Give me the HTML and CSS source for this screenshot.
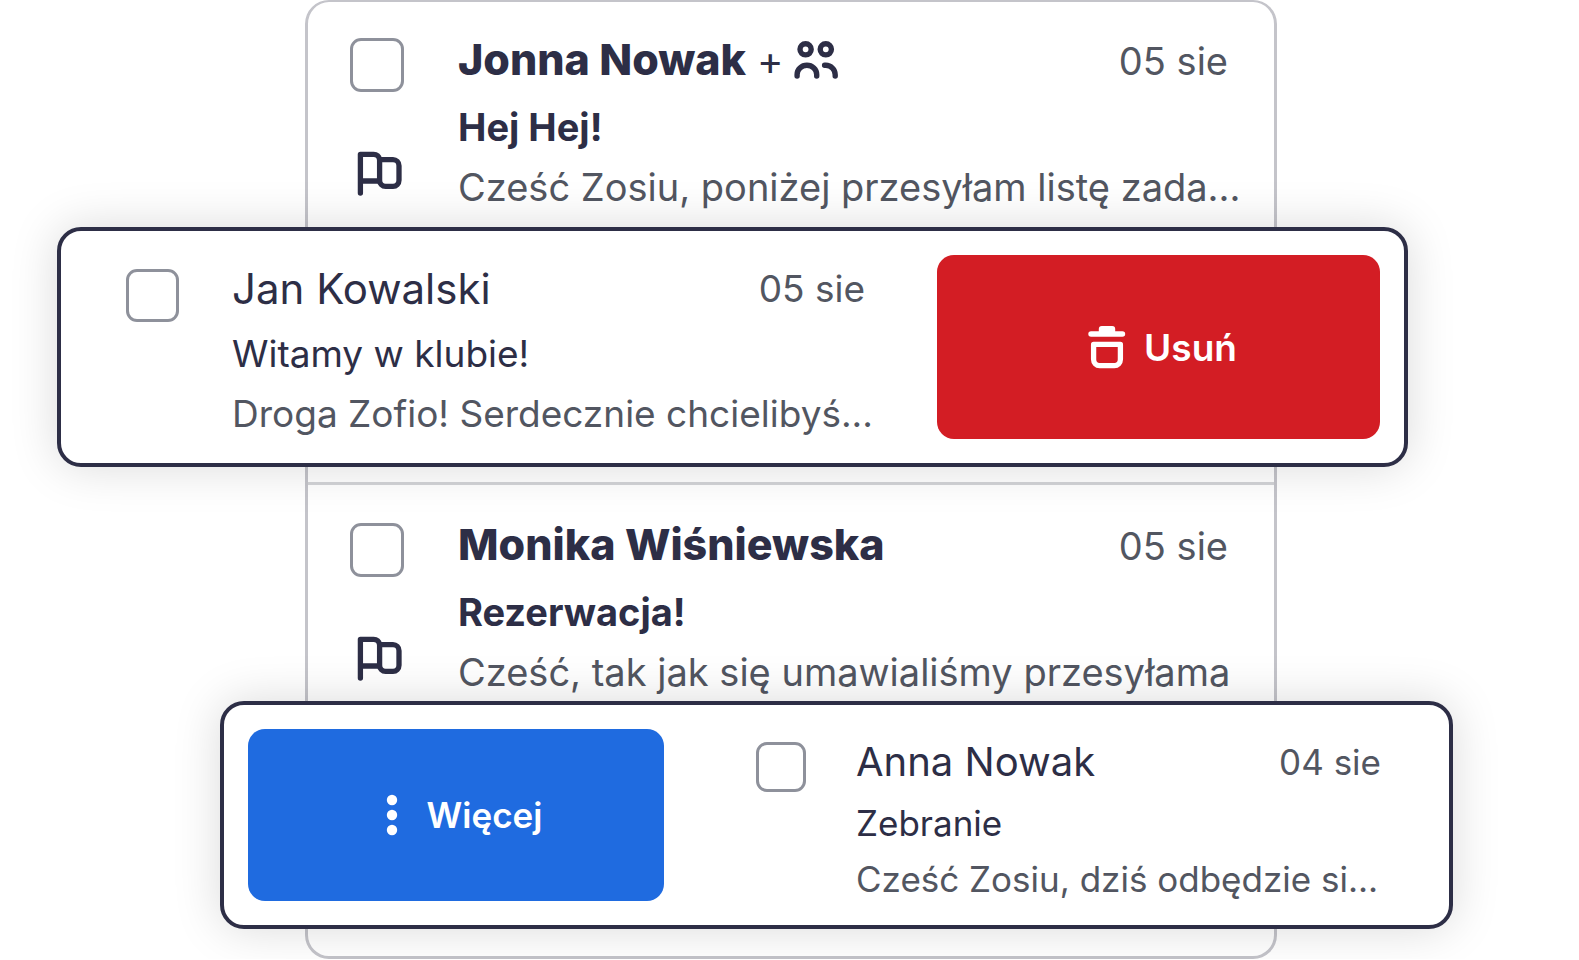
FILE: index.html
```
<!DOCTYPE html>
<html lang="pl">
  <head>
    <meta charset="utf-8" />
    <title>Poczta</title>
    <link rel="stylesheet" href="styles.css">
  </head>
  <body>
    <main class="mailbox">
      <ul class="mail-list">
        <li class="mail-row">
          <div class="mail-tools">
            <input class="mail-check" type="checkbox" aria-labelledby="name-jonna" />
            <button class="flag-btn" aria-label="Oflaguj">
              <svg class="flag-icon" viewBox="0 0 46 46">
                <path d="M3.4 42V3.3H16.6a6 6 0 0 1 6 5.4M3.4 30h19" />
                <path d="M22.6 8.7H36a6 6 0 0 1 6 6v14.6a6 6 0 0 1-6 6h-7.4a6 6 0 0 1-6-6z" />
              </svg>
            </button>
          </div>
          <div class="mail-text">
            <div class="mail-head">
              <span class="mail-name" id="name-jonna">Jonna Nowak</span>
              <span class="mail-plus">+</span>
              <svg class="people-icon" viewBox="0 0 44 38">
                <circle cx="11.6" cy="8.3" r="5.6" />
                <circle cx="31.8" cy="8.3" r="5.6" />
                <path d="M3.1 35v-1.5a9.8 9.2 0 0 1 19.6 0V35" />
                <path d="M30.6 24.3h1.2a9.4 9.4 0 0 1 9.4 9.4V35" />
              </svg>
              <time class="mail-date">05 sie</time>
            </div>
            <div class="mail-subject">Hej Hej!</div>
            <div class="mail-preview">Cześć Zosiu, poniżej przesyłam listę zada...</div>
          </div>
        </li>
        <li class="mail-row">
          <div class="mail-tools">
            <input class="mail-check" type="checkbox" aria-labelledby="name-monika" />
            <button class="flag-btn" aria-label="Oflaguj">
              <svg class="flag-icon" viewBox="0 0 46 46">
                <path d="M3.4 42V3.3H16.6a6 6 0 0 1 6 5.4M3.4 30h19" />
                <path d="M22.6 8.7H36a6 6 0 0 1 6 6v14.6a6 6 0 0 1-6 6h-7.4a6 6 0 0 1-6-6z" />
              </svg>
            </button>
          </div>
          <div class="mail-text">
            <div class="mail-head">
              <span class="mail-name" id="name-monika">Monika Wiśniewska</span>
              <time class="mail-date">05 sie</time>
            </div>
            <div class="mail-subject">Rezerwacja!</div>
            <div class="mail-preview">Cześć, tak jak się umawialiśmy przesyłama</div>
          </div>
        </li>
      </ul>

      <!-- rows pulled out of the list by a swipe -->
      <article class="swipe-card swipe-left">
        <input class="mail-check" type="checkbox" aria-labelledby="name-jan" />
        <div class="mail-text">
          <div class="mail-head">
            <span class="mail-name" id="name-jan">Jan Kowalski</span>
            <time class="mail-date">05 sie</time>
          </div>
          <div class="mail-subject">Witamy w klubie!</div>
          <div class="mail-preview">Droga Zofio! Serdecznie chcielibyś...</div>
        </div>
        <button class="action-btn delete-btn">
          <svg class="trash-icon" viewBox="0 0 38 43">
            <path class="trash-lid" d="M3.1 5.2h7.7V3a3 3 0 0 1 3-3h10.4a3 3 0 0 1 3 3v2.2h7.2a2.8 2.8 0 0 1 0 5.6H3.1a2.8 2.8 0 0 1 0-5.6z" />
            <path class="trash-bin" d="M5.6 18.4h26.8v15.2a6 6 0 0 1-6 6H11.6a6 6 0 0 1-6-6z" />
          </svg>
          Usuń
        </button>
      </article>

      <article class="swipe-card swipe-right">
        <button class="action-btn more-btn">
          <svg class="dots-icon" viewBox="0 0 12 42">
            <circle cx="6" cy="6" r="5.2" />
            <circle cx="6" cy="21" r="5.2" />
            <circle cx="6" cy="36" r="5.2" />
          </svg>
          Więcej
        </button>
        <input class="mail-check" type="checkbox" aria-labelledby="name-anna" />
        <div class="mail-text">
          <div class="mail-head">
            <span class="mail-name" id="name-anna">Anna Nowak</span>
            <time class="mail-date">04 sie</time>
          </div>
          <div class="mail-subject">Zebranie</div>
          <div class="mail-preview">Cześć Zosiu, dziś odbędzie si...</div>
        </div>
      </article>
    </main>
  </body>
</html>
```
FILE: styles.css
```
* {
  box-sizing: border-box;
}
body {
  margin: 0;
  background-color: #fff;
  font-family: Inter, sans-serif;
  color: #2d2e46;
}
button {
  padding: 0;
  border: none;
  background: none;
  font-family: inherit;
  color: inherit;
}

.mailbox {
  position: relative;
  padding: 0 302px 0 305px;
}
.mail-list {
  min-height: 959px;
  margin: 0;
  padding: 0;
  list-style: none;
  border: 3px solid #c4c4ca;
  border-top-width: 2px;
  border-radius: 24px;
}
.mail-row {
  display: flex;
  gap: 54px;
  height: 480px;
  padding: 21px 46px 0 42px;
}
.mail-row + .mail-row {
  height: auto;
  padding-top: 23px;
  border-top: 3px solid #d3d4d7;
}

.mail-tools {
  display: flex;
  flex-direction: column;
  align-items: center;
  gap: 59px;
  padding-top: 15px;
}
.mail-check {
  appearance: none;
  flex: none;
  width: 54px;
  height: 54px;
  margin: 0;
  border: 3px solid #8e919b;
  border-radius: 11px;
  background-color: #fff;
}
.flag-btn {
  width: 46px;
  height: 46px;
  margin-left: 6px;
}
.flag-icon {
  display: block;
  width: 46px;
  height: 46px;
  fill: none;
  stroke: #2d2e46;
  stroke-width: 5.3;
  stroke-linecap: round;
  stroke-linejoin: round;
}

.mail-text {
  flex: 1;
  min-width: 0;
  font-size: 38px;
  line-height: 60px;
  white-space: nowrap;
}
.mail-head {
  display: flex;
  align-items: baseline;
  height: 74px;
  line-height: 72px;
}
.mail-name {
  font-size: 44px;
}
.mail-date {
  margin-left: auto;
  color: #525661;
}
.mail-preview {
  color: #525661;
}
.mail-row .mail-name {
  font-size: 43px;
  font-weight: 800;
}
.mail-row .mail-subject {
  font-weight: 700;
}
.mail-plus {
  margin-left: 11px;
  font-size: 40px;
  line-height: 48px;
}
.people-icon {
  align-self: center;
  width: 44px;
  height: 38px;
  margin-left: 10px;
  fill: none;
  stroke: #2d2e46;
  stroke-width: 5.4;
  stroke-linecap: round;
}

.swipe-card {
  position: absolute;
  display: flex;
  border: 4px solid #2d2e46;
  border-radius: 24px;
  background-color: #fff;
  box-shadow: 0 0 48px rgba(0, 0, 0, 0.15);
}
.swipe-card .mail-head {
  align-items: flex-start;
}
.swipe-left {
  top: 227px;
  left: 57px;
  right: 171px;
  padding: 24px 24px 19px 65px;
}
.swipe-left .mail-check {
  width: 53px;
  height: 53px;
  margin: 14px 53px 0 0;
}
.swipe-left .mail-text {
  margin-right: 72px;
  font-size: 37px;
}
.swipe-left .mail-head {
  height: 69px;
  line-height: 68px;
}
.swipe-left .mail-name {
  font-size: 42px;
}
.swipe-right {
  top: 701px;
  left: 220px;
  right: 126px;
  padding: 24px 68px 18px 24px;
}
.swipe-right .mail-check {
  width: 50px;
  height: 50px;
  margin: 13px 50px 0 92px;
}
.swipe-right .mail-text {
  font-size: 35px;
  line-height: 56px;
}
.swipe-right .mail-head {
  height: 66px;
  line-height: 66px;
}
.swipe-right .mail-name {
  font-size: 40px;
}

.action-btn {
  display: flex;
  align-items: center;
  justify-content: center;
  flex: none;
  border-radius: 17px;
  font-weight: 600;
  color: #fff;
}
.delete-btn {
  gap: 18px;
  width: 443px;
  height: 184px;
  padding-left: 8px;
  background-color: #d31d24;
  font-size: 37px;
}
.more-btn {
  gap: 29px;
  width: 416px;
  height: 172px;
  padding-left: 16px;
  background-color: #1f6be0;
  font-size: 35px;
}
.trash-icon {
  width: 38px;
  height: 43px;
}
.trash-lid {
  fill: #fff;
}
.trash-bin {
  fill: none;
  stroke: #fff;
  stroke-width: 5.3;
  stroke-linejoin: round;
}
.dots-icon {
  width: 12px;
  height: 42px;
  fill: #fff;
}
```
